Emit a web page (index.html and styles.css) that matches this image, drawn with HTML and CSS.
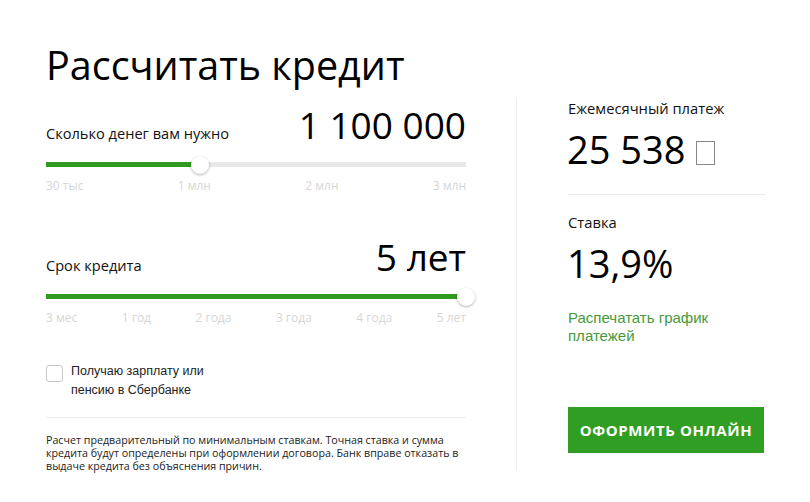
FILE: index.html
```html
<!DOCTYPE html>
<html lang="ru">
<head>
    <meta charset="UTF-8">
    <title>Рассчитать кредит</title>
    <link rel="stylesheet" href="styles.css">
</head>
<body>
    <div class="calc">
        <div class="calc-main">
            <h1>Рассчитать кредит</h1>

            <div class="param">
                <div class="param-head">
                    <span class="param-label">Сколько денег вам нужно</span>
                    <span class="param-value">1 100 000</span>
                </div>
                <div class="slider">
                    <div class="slider-fill" style="width: 36.7%"></div>
                    <div class="slider-thumb" style="left: 36.7%"></div>
                </div>
                <div class="slider-marks">
                    <span>30 тыс</span>
                    <span>1 млн</span>
                    <span>2 млн</span>
                    <span>3 млн</span>
                </div>
            </div>

            <div class="param param-term">
                <div class="param-head">
                    <span class="param-label">Срок кредита</span>
                    <span class="param-value">5 лет</span>
                </div>
                <div class="slider">
                    <div class="slider-fill" style="width: 100%"></div>
                    <div class="slider-thumb" style="left: 100%"></div>
                </div>
                <div class="slider-marks">
                    <span>3 мес</span>
                    <span>1 год</span>
                    <span>2 года</span>
                    <span>3 года</span>
                    <span>4 года</span>
                    <span>5 лет</span>
                </div>
            </div>

            <label class="check">
                <span class="check-box"></span>
                <span class="check-text">Получаю зарплату или<br>пенсию в Сбербанке</span>
            </label>

            <p class="note">Расчет предварительный по минимальным ставкам. Точная ставка и сумма кредита будут определены при оформлении договора. Банк вправе отказать в выдаче кредита без объяснения причин.</p>
        </div>

        <div class="calc-side">
            <div class="result result-pay">
                <div class="result-label">Ежемесячный платеж</div>
                <div class="result-value">25 538<span class="rub"></span></div>
            </div>
            <div class="result">
                <div class="result-label">Ставка</div>
                <div class="result-value">13,9%</div>
            </div>
            <a class="print-link" href="#">Распечатать график<br>платежей</a>
            <button class="apply-btn">Оформить онлайн</button>
        </div>
    </div>
</body>
</html>
```

FILE: styles.css
```css
body {
    margin: 0;
    background: #fff;
    font-family: 'Open Sans', sans-serif;
    color: #111;
}
.calc {
    display: flex;
    padding: 42px 0 0 46px;
}
.calc-main {
    width: 420px;
}
h1 {
    margin: 0 0 16px;
    font-size: 39.5px;
    font-weight: 400;
    line-height: 46px;
    color: #000;
}
.param-head {
    display: flex;
    justify-content: space-between;
    align-items: baseline;
    height: 42px;
}
.param-label {
    font-size: 14.6px;
}
.param-value {
    font-size: 37px;
    line-height: 42px;
    color: #000;
}
.slider {
    position: relative;
    height: 5px;
    margin-top: 16px;
    background: #e8e8e8;
}
.slider-fill {
    height: 100%;
    background: #2f9a1f;
}
.slider-thumb {
    position: absolute;
    top: -6px;
    width: 18px;
    height: 18px;
    margin-left: -9px;
    border-radius: 50%;
    background: #fff;
    box-shadow: 0 1px 3px rgba(0,0,0,0.3);
}
.slider-marks {
    display: flex;
    justify-content: space-between;
    margin-top: 11px;
    font-size: 12px;
    line-height: 16px;
    color: #d6d6d6;
}
.param-term {
    margin-top: 42px;
}
.check {
    display: flex;
    gap: 8px;
    margin-top: 36px;
    padding-bottom: 17px;
    border-bottom: 1px solid #eee;
    font-family: 'Liberation Sans', Arial, sans-serif;
    font-size: 12.5px;
    line-height: 19px;
    color: #222;
}
.check-box {
    flex: none;
    width: 15px;
    height: 15px;
    margin-top: 3px;
    border: 1px solid #c8c8c8;
    border-radius: 3px;
}
.note {
    margin: 16px 0 0;
    font-size: 10.7px;
    line-height: 13px;
    color: #222;
}
.calc-side {
    width: 198px;
    height: 371px;
    margin-top: 57px;
    margin-left: 50px;
    padding-left: 51px;
    border-left: 1px solid #eee;
}
.result-pay {
    padding-bottom: 23px;
    border-bottom: 1px solid #eee;
    margin-bottom: 18px;
}
.result-label {
    font-size: 14.75px;
    line-height: 18px;
}
.result-value {
    margin-top: 10px;
    margin-left: -1px;
    font-size: 38px;
    line-height: 44px;
    color: #000;
}
.rub {
    display: inline-block;
    width: 17px;
    height: 22px;
    margin-left: 10px;
    border: 1px solid #888;
    vertical-align: -1px;
}
.print-link {
    display: block;
    margin-top: 24px;
    font-family: 'Liberation Sans', Arial, sans-serif;
    font-size: 15px;
    line-height: 18px;
    color: #45993a;
    text-decoration: none;
}
.apply-btn {
    display: block;
    margin-top: 62px;
    width: 196px;
    height: 46px;
    border: none;
    background: #2f9e22;
    color: #fff;
    font-family: 'Open Sans', sans-serif;
    font-size: 15px;
    font-weight: 700;
    letter-spacing: 0.6px;
    text-transform: uppercase;
}
```
